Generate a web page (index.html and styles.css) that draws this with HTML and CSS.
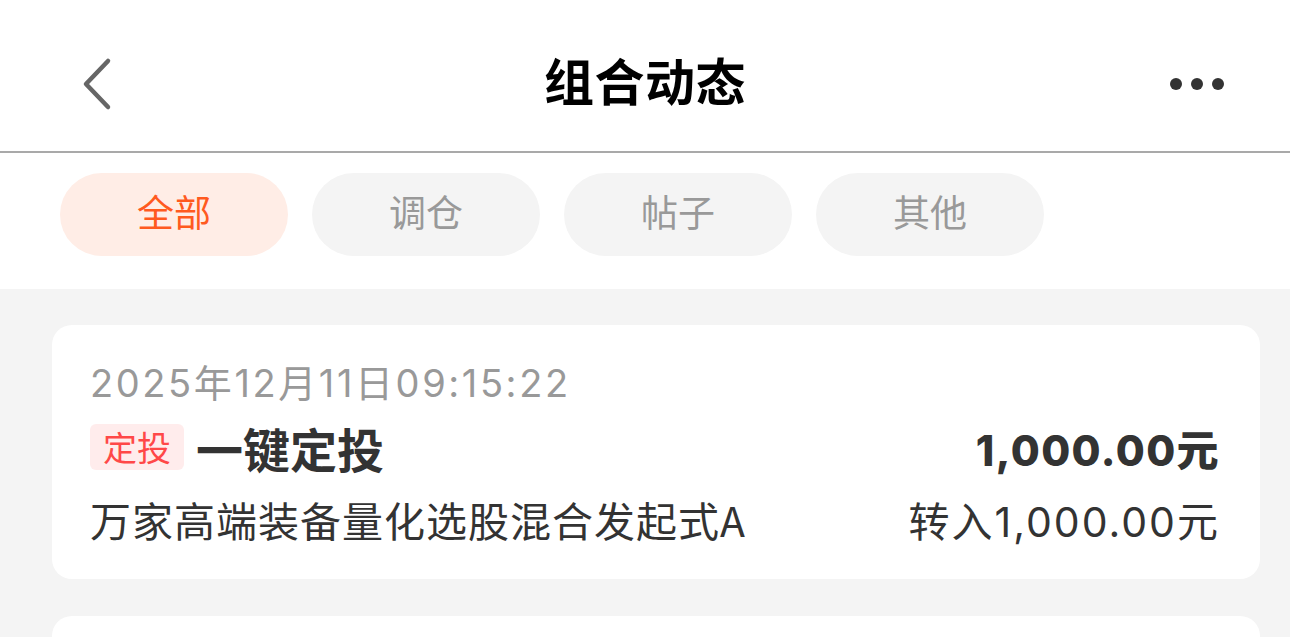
FILE: index.html
```html
<!DOCTYPE html>
<html lang="zh-CN">
<head>
    <meta charset="UTF-8">
    <meta name="viewport" content="width=device-width, initial-scale=1.0">
    <title>组合动态</title>
    <link rel="stylesheet" href="styles.css">
</head>
<body>

    <div class="header">
        <div class="back">
            <svg width="40" height="60" viewBox="0 0 40 60">
                <polyline points="30,6 8,29 30,52" fill="none" stroke="#666" stroke-width="4.5" stroke-linecap="round" stroke-linejoin="round"/>
            </svg>
        </div>
        <h1 class="title">组合动态</h1>
        <div class="more">
            <span class="dot"></span>
            <span class="dot"></span>
            <span class="dot"></span>
        </div>
    </div>

    <div class="tabs">
        <div class="tab active">全部</div>
        <div class="tab">调仓</div>
        <div class="tab">帖子</div>
        <div class="tab">其他</div>
    </div>

    <div class="list">
        <div class="card">
            <div class="date">2025年12月11日09:15:22</div>
            <div class="row main-row">
                <div class="left">
                    <span class="tag">定投</span>
                    <span class="name">一键定投</span>
                </div>
                <div class="amount">1,000.00元</div>
            </div>
            <div class="row sub-row">
                <div class="fund">万家高端装备量化选股混合发起式A</div>
                <div class="transfer">转入1,000.00元</div>
            </div>
        </div>
        <div class="card"></div>
    </div>

</body>
</html>
```

FILE: styles.css
```css
body {
    margin: 0;
    padding: 0;
    background: #f4f4f4;
    font-family: "Noto Sans CJK SC", "Noto Sans", sans-serif;
    color: #333;
    overflow: hidden;
}

.header {
    height: 151px;
    background: #fff;
    border-bottom: 2px solid #a9a9a9;
    display: grid;
    grid-template-columns: 1fr auto 1fr;
    align-items: center;
    padding: 0 66px 0 78px;
}

.back {
    width: 40px;
    height: 60px;
    margin-top: 18px;
}

.title {
    margin: 6px 12px 0 0;
    font-size: 50px;
    font-weight: 700;
    color: #000;
    letter-spacing: 0.5px;
}

.more {
    justify-self: end;
    display: flex;
    gap: 9px;
    margin-top: 16px;
}

.dot {
    width: 12px;
    height: 12px;
    border-radius: 50%;
    background: #333;
}

.tabs {
    background: #fff;
    display: flex;
    gap: 24px;
    padding: 20px 60px 33px;
}

.tab {
    width: 228px;
    height: 83px;
    border-radius: 42px;
    background: #f4f4f4;
    color: #999;
    font-size: 37px;
    line-height: 77px;
    text-align: center;
}

.tab.active {
    background: #ffede6;
    color: #ff5a1f;
}

.list {
    padding: 36px 30px 0 52px;
    display: flex;
    flex-direction: column;
    gap: 37px;
}

.card {
    background: #fff;
    border-radius: 20px;
    padding: 33px 40px 34px 38px;
    min-height: 187px;
}

.date {
    font-family: "Inter", "Noto Sans CJK SC", sans-serif;
    font-size: 38px;
    line-height: 50px;
    letter-spacing: 2.6px;
    color: #999;
}

.row {
    display: flex;
    justify-content: space-between;
    align-items: center;
}

.main-row {
    margin-top: 11px;
    height: 56px;
}

.left {
    display: flex;
    align-items: center;
}

.tag {
    background: #ffecec;
    color: #ff4848;
    font-size: 34px;
    line-height: 46px;
    padding: 0 13px;
    border-radius: 6px;
    margin-right: 12px;
}

.name {
    font-size: 47px;
    font-weight: 700;
    color: #333;
}

.amount {
    font-family: "Inter", "Noto Sans CJK SC", sans-serif;
    font-size: 42px;
    font-weight: 800;
    letter-spacing: 1.4px;
    color: #333;
}

.sub-row {
    margin-top: 18px;
    height: 52px;
    font-size: 41px;
    color: #333;
}

.fund {
    letter-spacing: 1px;
}

.transfer {
    font-family: "Inter", "Noto Sans CJK SC", sans-serif;
    letter-spacing: 2px;
}
```
